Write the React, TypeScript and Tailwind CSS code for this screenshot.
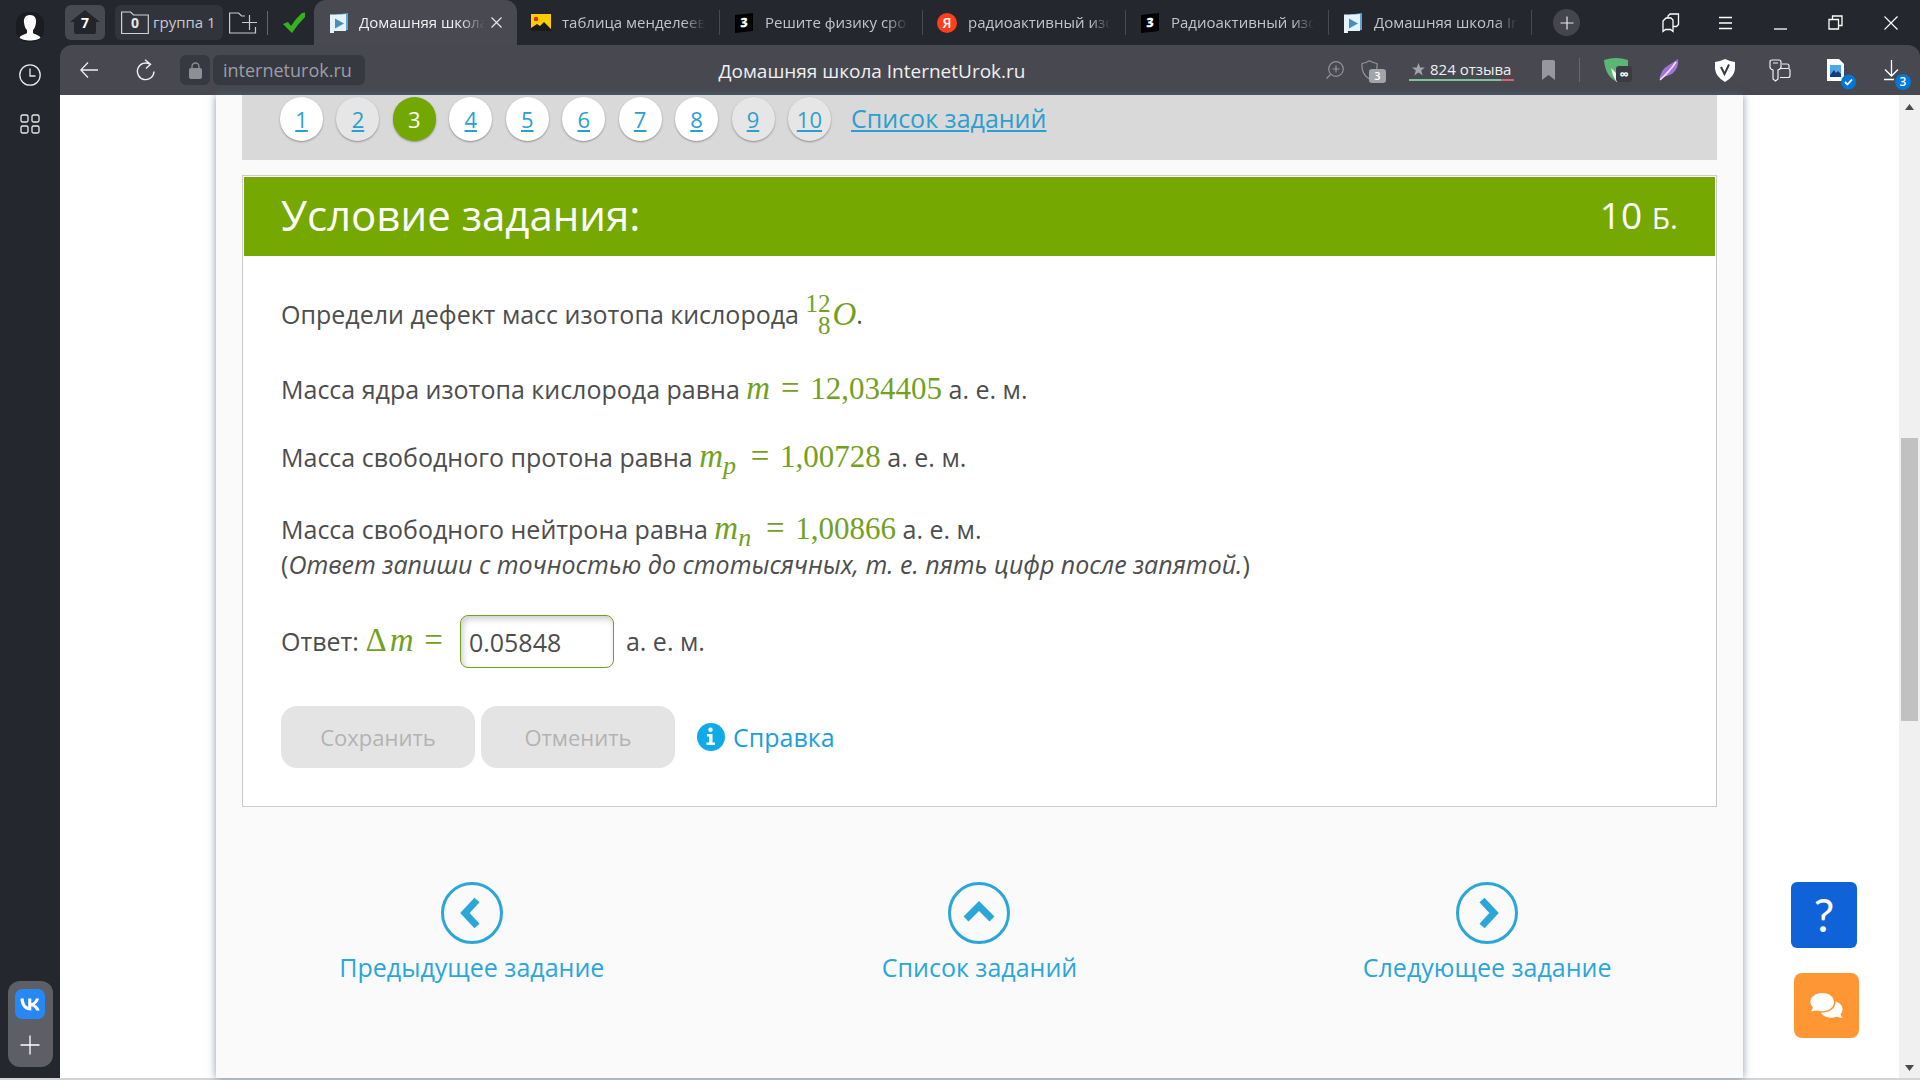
import { ReactNode, useState } from "react"

type Tab = { title: string; icon: ReactNode; active?: boolean }

function SchoolIcon() {
  return (
    <svg width="19" height="20" viewBox="0 0 19 20" className="shrink-0">
      <path d="M6 1.5 18 0v17l-12 1z" fill="#5fa3cf" />
      <path d="M0 1.5h12L16 1v17H4v2H0z" fill="#e4f2fb" />
      <path d="M5 5.5v10l9-5z" fill="#4a8cc0" />
    </svg>
  )
}

function PictureIcon() {
  return (
    <svg width="20" height="17" viewBox="0 0 20 17" className="shrink-0">
      <path d="M0 0h20v17H0z" fill="#ffcc00" />
      <path d="M0 17v-3l6-4 3 2 4-4 7 7v2z" fill="#1b1b1b" />
      <circle cx="5" cy="5" r="2.2" fill="#e52620" />
    </svg>
  )
}

function ZnanijaIcon() {
  return (
    <span className="flex h-[18px] w-[18px] shrink-0 -skew-y-6 items-center justify-center bg-black font-['Open_Sans',sans-serif] text-[13px] font-extrabold text-white">
      3
    </span>
  )
}

function YandexIcon() {
  return (
    <span className="flex h-5 w-5 shrink-0 items-center justify-center rounded-full bg-[#fc3f1d] text-[14px] font-semibold text-white">
      Я
    </span>
  )
}

const tabs: Tab[] = [
  { title: "Домашняя школа", icon: <SchoolIcon />, active: true },
  { title: "таблица менделеев", icon: <PictureIcon /> },
  { title: "Решите физику сроч", icon: <ZnanijaIcon /> },
  { title: "радиоактивный изо", icon: <YandexIcon /> },
  { title: "Радиоактивный изо", icon: <ZnanijaIcon /> },
  { title: "Домашняя школа In", icon: <SchoolIcon /> },
]

function Sidebar() {
  return (
    <aside className="flex w-[60px] shrink-0 flex-col items-center bg-[#25272f] pt-3 pb-[11px]">
      <button aria-label="Профиль">
        <svg width="28" height="30" viewBox="0 0 28 30">
          <rect width="28" height="30" rx="12" fill="#1b1c21" />
          <path d="M14 3c4.500 0 6.500 3 6 7.500-.4 4-1.800 6.500-3 7.500v3c1.500 1.500 5.500 1.500 7.500 4.500-3 4-18 4-21 0 2-3 6-3 7.500-4.500v-3c-1.200-1-2.600-3.500-3-7.500C7.500 6 9.500 3 14 3z" fill="#fff" />
        </svg>
      </button>
      <button aria-label="История" className="mt-[22px]">
        <svg width="22" height="22" viewBox="0 0 22 22" fill="none" stroke="#e8e8ea" strokeWidth="1.3">
          <circle cx="11" cy="11" r="10.200" />
          <path d="M11 4.500V12h5.500" />
        </svg>
      </button>
      <button aria-label="Приложения" className="mt-7">
        <svg width="20" height="20" viewBox="0 0 20 20" fill="none" stroke="#e8e8ea" strokeWidth="1.3">
          <rect x="1" y="1" width="7" height="7" rx="1.500" />
          <rect x="12" y="1" width="7" height="7" rx="1.500" />
          <rect x="1" y="12" width="7" height="7" rx="1.500" />
          <rect x="12" y="12" width="7" height="7" rx="1.500" />
        </svg>
      </button>
      <div className="mt-auto flex h-[86px] w-[45px] flex-col items-center justify-between rounded-xl bg-[#5e5f66] pt-2 pb-3">
        <button aria-label="ВКонтакте">
          <svg width="30" height="30" viewBox="0 0 30 30">
            <rect width="30" height="30" rx="7" fill="#2787f5" />
            <path d="M16 21.500C9.500 21.500 5.700 17 5.500 9.500h3.300c.1 5.500 2.500 7.800 4.400 8.300V9.500h3.100v4.700c1.900-.2 3.900-2.300 4.600-4.700H24c-.5 2.900-2.700 5-4.200 5.900 1.500.7 4 2.600 4.900 6.100h-3.400c-.7-2.300-2.600-4-5-4.300v4.300z" fill="#fff" />
          </svg>
        </button>
        <button aria-label="Добавить">
          <svg width="20" height="20" viewBox="0 0 20 20" stroke="#fff" strokeWidth="1.300">
            <path d="M10 .5v19M.5 10h19" />
          </svg>
        </button>
      </div>
    </aside>
  )
}

function TabBar() {
  return (
    <div className="flex h-[45px] items-center bg-[#25272f]">
      <button className="ml-[5px] flex h-[35px] w-10 shrink-0 items-center justify-center rounded-md bg-[#484951]">
        <span className="relative flex h-[25px] w-[30px] items-center justify-center">
          <svg width="30" height="25" viewBox="0 0 30 25" className="absolute inset-0">
            <path d="M15 0 30 12h-4v10q0 2-2 2H6q-2 0-2-2V12H0z" fill="#23252d" />
          </svg>
          <span className="relative text-[14px] font-bold text-white">7</span>
        </span>
      </button>
      <button className="ml-[10px] flex h-[35px] w-[108px] shrink-0 items-center gap-1 rounded-md bg-[#32343d] pl-[6px] text-[15px] text-[#c9cace]">
        <span className="relative flex h-6 w-7 shrink-0 items-center justify-center">
          <svg width="28" height="24" viewBox="0 0 28 24" fill="none" stroke="#d0d1d4" strokeWidth="1.200" className="absolute inset-0">
            <path d="M.6 22.500V1h9l3 3h14.700v18.500z" />
          </svg>
          <span className="relative text-[14px] font-bold text-[#e6e6e8]">0</span>
        </span>
        <span className="whitespace-nowrap">группа 1</span>
      </button>
      <button aria-label="Новая группа" className="ml-[6px] shrink-0">
        <svg width="28" height="22" viewBox="0 0 28 22" fill="none" stroke="#c9cace" strokeWidth="1.200">
          <path d="M26.500 15v6H.6V1h9l3 3H16M13 10.500h15M20.500 3v15" />
        </svg>
      </button>
      <span className="ml-[10px] h-6 w-px bg-[#65676e]" />
      <svg width="22" height="22" viewBox="0 0 22 22" className="ml-[15px] shrink-0">
        <path d="m0 12 5-2 3 4Q13 6 19 1l3-.5V5Q14 13 9 21z" fill="#35b21e" />
      </svg>
      <div className="ml-[9px] flex h-full min-w-0">
        {tabs.map((tab, i) => (
          <div
            key={i}
            className={
              tab.active
                ? "flex h-full w-[203px] items-center rounded-t-xl bg-[#484951] px-[15px] text-[#f0f0f2]"
                : "my-[10px] flex h-[25px] w-[203px] items-center border-r border-[#484a52] px-[14px] text-[#c3c4c9]"
            }
          >
            <span className="flex w-5 shrink-0 justify-center">{tab.icon}</span>
            <span
              className={
                tab.active
                  ? "ml-[10px] w-[126px] overflow-hidden mask-r-from-80% text-[15px] whitespace-nowrap"
                  : "ml-[11px] w-[146px] overflow-hidden mask-r-from-85% text-[15px] whitespace-nowrap"
              }
            >
              {tab.title}
            </span>
            {tab.active && (
              <button aria-label="Закрыть вкладку" className="ml-auto shrink-0">
                <svg width="11" height="11" viewBox="0 0 11 11" stroke="#e8e8ea" strokeWidth="1.200">
                  <path d="m.5.5 10 10M10.500.5l-10 10" />
                </svg>
              </button>
            )}
          </div>
        ))}
      </div>
      <button aria-label="Новая вкладка" className="ml-[21px] flex h-[27px] w-[27px] shrink-0 items-center justify-center rounded-full bg-[#45464d]">
        <svg width="14" height="14" viewBox="0 0 14 14" stroke="#e8e8ea" strokeWidth="1.200">
          <path d="M7 .5v13M.5 7h13" />
        </svg>
      </button>
      <div className="ml-auto flex shrink-0 items-center pr-[2px]">
        <button aria-label="Закладки" className="flex w-[55px] justify-center">
          <svg width="18" height="20" viewBox="0 0 18 20" fill="none" stroke="#fff" strokeWidth="1.300">
            <path d="M1 18.500V8l3-3h5l2 2v11.500l-2.500-2h-5z" />
            <path d="M6 5V3l2-2h8.500v10.500l-2 2H11" />
          </svg>
        </button>
        <button aria-label="Меню" className="flex w-[55px] justify-center">
          <svg width="13" height="14" viewBox="0 0 13 14" stroke="#fff" strokeWidth="1.300">
            <path d="M0 1.500h13M0 7h13M0 12.500h13" />
          </svg>
        </button>
        <button aria-label="Свернуть" className="flex w-[55px] justify-center">
          <svg width="13" height="14" viewBox="0 0 13 14" stroke="#fff" strokeWidth="1.300">
            <path d="M0 13h13" />
          </svg>
        </button>
        <button aria-label="Восстановить" className="flex w-[55px] justify-center">
          <svg width="15" height="15" viewBox="0 0 15 15" fill="none" stroke="#fff" strokeWidth="1.300">
            <path d="M1 4.500h9.500V14H1zM4.500 4.500V1H14v9.500h-3.500" />
          </svg>
        </button>
        <button aria-label="Закрыть" className="flex w-[55px] justify-center">
          <svg width="14" height="14" viewBox="0 0 14 14" stroke="#fff" strokeWidth="1.200">
            <path d="m.5.5 13 13M13.500.5l-13 13" />
          </svg>
        </button>
      </div>
    </div>
  )
}

function Toolbar() {
  return (
    <div className="flex h-[50px] items-center rounded-tl-xl rounded-tr-xl bg-[#474850] pl-5">
      <button aria-label="Назад">
        <svg width="18" height="16" viewBox="0 0 18 16" fill="none" stroke="#f0f0f2" strokeWidth="1.300">
          <path d="M8 .5.800 8 8 15.500M1 8h17" />
        </svg>
      </button>
      <button aria-label="Обновить" className="ml-[38px]">
        <svg width="19" height="22" viewBox="0 0 19 22" fill="none" stroke="#f0f0f2" strokeWidth="1.400">
          <path d="M18 12.500A8.300 8.300 0 1 1 14 5.200M9 .8l5.500 4.400L10 9.500" />
        </svg>
      </button>
      <button aria-label="Защищённое соединение" className="ml-[25px] flex h-[30px] w-[30px] items-center justify-center rounded-md bg-[#373942]">
        <svg width="13" height="17" viewBox="0 0 13 17">
          <rect y="6" width="13" height="11" rx="2" fill="#8d8f95" />
          <path d="M3 7V4.500a3.500 3.500 0 0 1 7 0V7" fill="none" stroke="#8d8f95" strokeWidth="1.300" />
        </svg>
      </button>
      <button className="ml-[3px] flex h-[30px] w-[152px] shrink-0 items-center rounded-md bg-[#373942] pl-[10px] text-[18px] text-[#9c9ea5]">
        interneturok.ru
      </button>
      <div className="flex-1 pt-[2px] pl-[53px] text-center text-[19px] whitespace-nowrap text-[#f0f0f2]">
        Домашняя школа InternetUrok.ru
      </div>
      <button aria-label="Масштаб" className="shrink-0">
        <svg width="18" height="18" viewBox="0 0 18 18" fill="none" stroke="#93949b" strokeWidth="1.200">
          <circle cx="10" cy="8" r="7.300" />
          <path d="m4.500 13.500-4 4M10 4.500v7M6.500 8h7" />
        </svg>
      </button>
      <button aria-label="Protect" className="relative ml-[17px] h-6 w-6 shrink-0">
        <svg width="17" height="20" viewBox="0 0 17 20" fill="none" stroke="#93949b" strokeWidth="1.200">
          <path d="M8.500.8Q12 3 16 3.500c.5 6-1 12-7.500 15.500C2 15.500.500 9.500 1 3.500 5 3 8.500.8 8.500.8z" />
        </svg>
        <span className="absolute top-[11px] left-[8px] flex h-[14px] w-[17px] items-center justify-center rounded-[3px] bg-[#a3a4a9] text-[11px] font-semibold text-white">3</span>
      </button>
      <a href="#reviews" className="ml-6 w-[105px] shrink-0">
        <span className="flex items-center gap-[5px] pl-[3px] text-[15px] leading-5 whitespace-nowrap text-[#f0f0f2]">
          <svg width="13" height="13" viewBox="0 0 13 13" className="shrink-0">
            <path d="m6.500 0 1.700 4.600H13L9.200 7.600l1.500 4.900-4.200-3-4.200 3 1.500-4.900L0 4.600h4.800z" fill="#a3a4a9" />
          </svg>
          824 отзыва
        </span>
        <span className="flex h-[2px]">
          <span className="flex-1 bg-[#7fc39c]" />
          <span className="w-[13px] bg-[#d9636b]" />
        </span>
      </a>
      <button aria-label="В закладки" className="ml-7 shrink-0">
        <svg width="13" height="20" viewBox="0 0 13 20">
          <path d="M0 2q0-2 2-2h9q2 0 2 2v18l-6.500-5L0 20z" fill="#97989e" />
        </svg>
      </button>
      <span className="mx-6 h-6 w-px shrink-0 bg-[#666870]" />
      <button aria-label="VPN" className="relative w-[28px] shrink-0">
        <svg width="24" height="24" viewBox="0 0 24 24">
          <path d="M0 2q12-4 24 0v9q-2 8-11 13Q1 18 0 2z" fill="#5cb574" />
          <path d="m7 10 6 6v8l-1-1q-4-6-5-13z" fill="#eef8f0" />
        </svg>
        <span className="absolute top-[8px] left-[12px] flex h-4 w-4 items-center justify-center rounded-[3px] bg-[#3b3c42] text-[13px] leading-none font-bold text-white">∞</span>
      </button>
      <button aria-label="Перо" className="ml-[27px] shrink-0">
        <svg width="20" height="22" viewBox="0 0 20 22">
          <path d="M19 0c1 8-3 15-11 17l-4 1-3 3q-1-3 1-6C4 8 11 6 19 0z" fill="#a374dd" />
          <path d="M17 3Q11 12 1 21" stroke="#f0e3ff" strokeWidth="1.500" fill="none" />
        </svg>
      </button>
      <button aria-label="Блокировщик" className="ml-[36px] shrink-0">
        <svg width="20" height="23" viewBox="0 0 20 23">
          <path d="M10 0q5 2.500 10 3v7q-1 8-10 13Q1 18 0 10V3q5-.5 10-3z" fill="#fff" />
          <path d="m6 8 3.500 7L14 5.500" fill="none" stroke="#3a3b42" strokeWidth="2" />
        </svg>
      </button>
      <button aria-label="Пароли" className="ml-[34px] shrink-0">
        <svg width="22" height="23" viewBox="0 0 22 23" fill="none" stroke="#f0f0f2" strokeWidth="1.200">
          <path d="M1 3q0-2 2-2h7q2 0 2 2v5q0 2-3 3v9l-2.500 2-2.500-2v-9Q1 10 1 8zM4 4h5" />
          <path d="M13 5h5q2 0 2 2v2M11 9.500h8q2 0 2 2v5q0 2-2 2h-8" />
        </svg>
      </button>
      <button aria-label="Снимок" className="relative ml-[36px] h-6 w-7 shrink-0">
        <svg width="17" height="22" viewBox="0 0 17 22">
          <path d="M0 0h12l5 5v17H0z" fill="#fff" />
          <path d="M3 6h11v12H3z" fill="#49a8ea" />
          <path d="m3 16 4-5 2 3 2-2 3 3v3H3z" fill="#173a78" />
        </svg>
        <svg width="15" height="16" viewBox="0 0 15 16" className="absolute top-[16px] left-[14px]">
          <circle cx="7.500" cy="8" r="7.500" fill="#0078d7" />
          <path d="m4 8 2.500 2.500L11 5.500" fill="none" stroke="#fff" strokeWidth="1.800" />
        </svg>
      </button>
      <button aria-label="Загрузки" className="relative mr-[9px] ml-7 h-6 w-7 shrink-0">
        <svg width="17" height="22" viewBox="0 0 17 22" fill="none" stroke="#fff" strokeWidth="1.300">
          <path d="M8.500 1v16M2 10.500 8.500 17l6.500-6.500M1 20.500h10" />
        </svg>
        <span className="absolute top-[16px] left-[12px] flex h-4 w-4 items-center justify-center rounded-full bg-[#0078d7] text-[12px] leading-none font-semibold text-white">3</span>
      </button>
    </div>
  )
}

const pages = [
  { n: 1 },
  { n: 2, muted: true },
  { n: 3, current: true },
  { n: 4 },
  { n: 5 },
  { n: 6 },
  { n: 7 },
  { n: 8 },
  { n: 9, muted: true },
  { n: 10, muted: true },
]

function pageClass(p: { muted?: boolean; current?: boolean }) {
  if (p.current) return "bg-[#73a800] text-white"
  if (p.muted) return "bg-[#e6e6e6] text-[#2b9fd0] underline"
  return "bg-white text-[#2b9fd0] underline"
}

function Pager() {
  return (
    <nav className="flex h-[65px] items-start gap-5 bg-[#d9d9d9] pt-[2px] pl-[38px]">
      <div className="flex w-[551px] justify-between">
        {pages.map((p) => (
          <a
            key={p.n}
            href={`#task-${p.n}`}
            className={`flex h-11 w-[43px] items-center justify-center rounded-full text-[22px] underline-offset-2 shadow-[0_1px_2px_rgba(0,0,0,0.35)] ${pageClass(p)}`}
          >
            {p.n}
          </a>
        ))}
      </div>
      <a href="#list" className="text-[25px] leading-[42px] text-[#2b9fd0] underline underline-offset-2">
        Список заданий
      </a>
    </nav>
  )
}

function MathText({ children }: { children: ReactNode }) {
  return <span className="font-['Liberation_Serif',serif] text-[31px] leading-none text-[#73a11f]">{children}</span>
}

// Variable name, with an optional lower index
function Var({ name, index }: { name: string; index?: string }) {
  return (
    <i className="text-[33px] leading-[0]">
      {name}
      {index && <sub className="mr-1 text-[26px]">{index}</sub>}
    </i>
  )
}

function Eq() {
  return <span className="mx-[3px] text-[33px] leading-[0]">=</span>
}

function TaskCard() {
  const [answer, setAnswer] = useState("0.05848")

  return (
    <section className="mt-[15px] border border-[#c9cbcd] bg-white p-px">
      <header className="flex h-[79px] items-center justify-between bg-[#75a800] px-[37px] pb-1 text-white">
        <h1 className="text-[42px]">Условие задания:</h1>
        <span className="text-[37px]">
          10 <span className="text-[30px]">Б.</span>
        </span>
      </header>
      <div className="px-[37px] pt-[35px] pb-[37px] text-[25px] leading-[35px] text-[#4d4d4d]">
        <p className="flex h-[46px] items-center whitespace-pre">
          {"Определи дефект масс изотопа кислорода "}
          <MathText>
            <span className="flex items-center">
              <span className="mr-[2px] flex flex-col items-end pt-[2px] text-[25px] leading-[22px]">
                <span>12</span>
                <span>8</span>
              </span>
              <Var name="O" />
            </span>
          </MathText>
          .
        </p>
        <p className="mt-[35px]">
          Масса ядра изотопа кислорода равна <MathText><Var name="m" /> <Eq /> 12,034405</MathText> а. е. м.
        </p>
        <p className="mt-[33px]">
          Масса свободного протона равна <MathText><Var name="m" index="p" /> <Eq /> 1,00728</MathText> а. е. м.
        </p>
        <p className="mt-[37px]">
          Масса свободного нейтрона равна <MathText><Var name="m" index="n" /> <Eq /> 1,00866</MathText> а. е. м.
        </p>
        <p>
          (<i>Ответ запиши с точностью до стотысячных, т. е. пять цифр после запятой.</i>)
        </p>
        <div className="mt-[33px] flex items-center">
          <label htmlFor="answer" className="mr-[14px]">
            Ответ: <MathText><span className="mr-[3px] text-[33px] leading-[0]">Δ</span><Var name="m" /> <Eq /></MathText>
          </label>
          <input
            id="answer"
            value={answer}
            onChange={(e) => setAnswer(e.target.value)}
            className="mr-3 h-[53px] w-[154px] rounded-lg border border-[#73a11f] px-2 shadow-[inset_2px_3px_6px_rgba(0,0,0,0.2)] outline-none"
          />
          а. е. м.
        </div>
        <div className="mt-[38px] flex items-center">
          <button disabled className="h-[62px] w-[194px] rounded-2xl bg-[#e4e4e4] text-[22px] text-[#b3b3b3]">
            Сохранить
          </button>
          <button disabled className="ml-[6px] h-[62px] w-[194px] rounded-2xl bg-[#e4e4e4] text-[22px] text-[#b3b3b3]">
            Отменить
          </button>
          <a href="#help" className="ml-[22px] flex items-center gap-2 text-[#1c9fdc]">
            <svg width="28" height="28" viewBox="0 0 28 28">
              <circle cx="14" cy="14" r="14" fill="#0fabe9" />
              <circle cx="13.500" cy="6.800" r="2.200" fill="#fff" />
              <path d="M10 11h5.500v8.500H18V22H9.500v-2.500H12v-6h-2z" fill="#fff" />
            </svg>
            Справка
          </a>
        </div>
      </div>
    </section>
  )
}

const links = [
  { label: "Предыдущее задание", d: "M36 18 24 31l12 13" },
  { label: "Список заданий", d: "M18 37 31 24l13 13" },
  { label: "Следующее задание", d: "M26 18l12 13-12 13" },
]

function TaskNav() {
  return (
    <nav className="mt-[75px] grid grid-cols-3 px-[2px]">
      {links.map((l) => (
        <a key={l.label} href="#nav" className="flex flex-col items-center gap-[5px] text-[25px] leading-9 text-[#2ba6d9]">
          <svg width="62" height="62" viewBox="0 0 62 62" fill="none" stroke="#2ba6d9">
            <circle cx="31" cy="31" r="29.500" strokeWidth="3" />
            <path d={l.d} strokeWidth="7" />
          </svg>
          {l.label}
        </a>
      ))}
    </nav>
  )
}

function Scrollbar() {
  return (
    <div className="flex w-[21px] shrink-0 flex-col items-center bg-[#f0f0f0]">
      <svg width="9" height="6" viewBox="0 0 9 6" className="mt-[9px]">
        <path d="M4.500 0 9 6H0z" fill="#4a4a4a" />
      </svg>
      <div className="mt-[328px] h-[283px] w-[17px] bg-[#c1c1c1]" />
      <svg width="9" height="6" viewBox="0 0 9 6" className="mt-auto mb-[7px]">
        <path d="M4.500 6 9 0H0z" fill="#4a4a4a" />
      </svg>
    </div>
  )
}

export default function App() {
  return (
    <div className="flex h-screen flex-col overflow-hidden bg-[#d4d4d4] pb-[2px] font-['Open_Sans','Noto_Sans',sans-serif]">
      <div className="flex min-h-0 flex-1">
        <Sidebar />
        <div className="flex min-w-0 flex-1 flex-col bg-[#25272f]">
          <TabBar />
          <Toolbar />
          <div className="flex min-h-0 flex-1">
            <main className="relative min-w-0 flex-1 bg-white">
              <div className="mx-auto h-full max-w-[1527px] bg-[#fafafa] shadow-[0_0_8px_rgba(80,110,135,0.7)]">
                <div className="px-[26px]">
                  <Pager />
                  <TaskCard />
                </div>
                <TaskNav />
              </div>

              {/* Floating help and chat buttons */}
              <div className="absolute right-10 bottom-10 flex flex-col gap-[25px]">
                <button className="mr-[2px] flex h-[66px] w-[66px] items-center justify-center rounded-md bg-[#1062d8] pb-[2px] font-['Lato',sans-serif] text-[46px] text-white">
                  ?
                </button>
                <button aria-label="Чат" className="ml-[3px] flex h-[65px] w-[65px] items-center justify-center rounded-lg bg-[#fe9733]">
                  <svg width="33" height="26" viewBox="0 0 33 26" fill="#fff">
                    <path d="M25.500 8.500c4 1 7 4 7 7.500 0 2-.8 4-2 5.200L32.500 25l-6-1.300c-6 2.300-13.500.5-15.500-4.200 9 .5 15-4.500 14.500-11z" />
                    <path d="M12.500 0C19.500 0 24 4 24 9s-5 9.300-12 9.300c-1.800 0-3.400-.3-5-.8L1 18.500l2-4C-3 8.500 2 0 12.500 0z" />
                  </svg>
                </button>
              </div>
            </main>
            <Scrollbar />
          </div>
        </div>
      </div>
    </div>
  )
}
